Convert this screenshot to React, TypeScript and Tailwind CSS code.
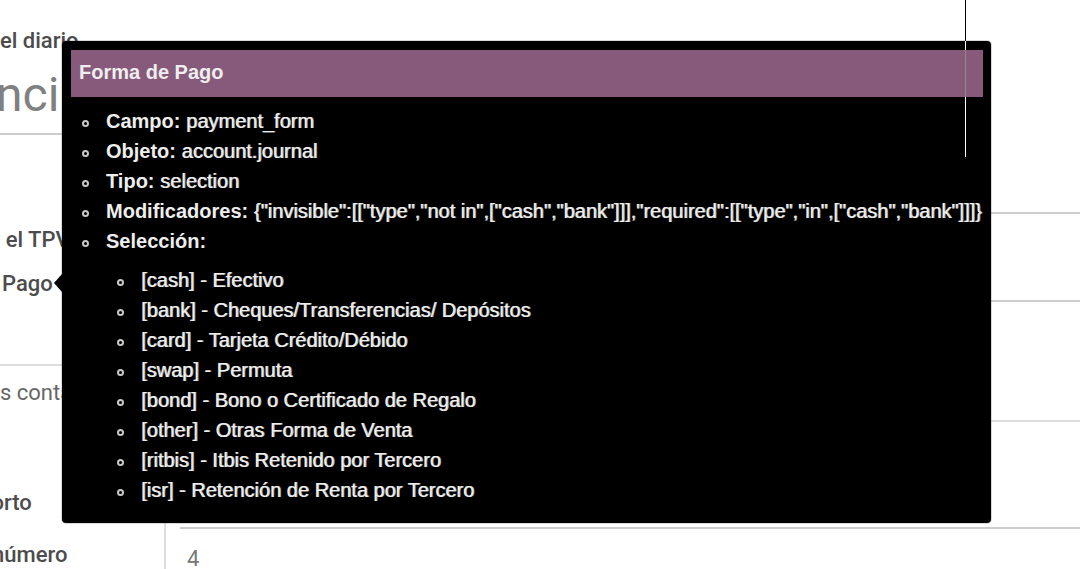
import type { ReactNode } from "react";

const selection = [
  "[cash] - Efectivo",
  "[bank] - Cheques/Transferencias/ Depósitos",
  "[card] - Tarjeta Crédito/Débido",
  "[swap] - Permuta",
  "[bond] - Bono o Certificado de Regalo",
  "[other] - Otras Forma de Venta",
  "[ritbis] - Itbis Retenido por Tercero",
  "[isr] - Retención de Renta por Tercero",
];

const details = [
  { name: "Campo:", value: "payment_form" },
  { name: "Objeto:", value: "account.journal" },
  { name: "Tipo:", value: "selection" },
  {
    name: "Modificadores:",
    value: '{"invisible":[["type","not in",["cash","bank"]]],"required":[["type","in",["cash","bank"]]]}',
  },
];

function Item({ children }: { children: ReactNode }) {
  return (
    <li className="flex h-[30px] items-center whitespace-nowrap">
      <span className="mt-1 mr-[17px] size-[7px] shrink-0 rounded-full border-2 border-[#c8c8c8]" />
      <span>{children}</span>
    </li>
  );
}

function Tooltip() {
  return (
    <div
      role="tooltip"
      className="absolute top-[41px] left-[62px] rounded bg-black p-[9px] pr-2 pb-[18px] font-['Liberation_Sans',sans-serif] text-[20px] text-[#eeeeee] ring-1 ring-black/15"
    >
      <svg className="absolute top-[233px] -left-2 h-[18px] w-2" viewBox="0 0 8 18" aria-hidden="true">
        <path d="M8 0 L0 9 L8 18 Z" fill="#000" />
      </svg>
      <h2 className="h-[47px] bg-[#875a7b] px-2 leading-[45px] font-bold">Forma de Pago</h2>
      <ul className="mt-[9px] pr-px pl-[11px]">
        {details.map((d) => (
          <Item key={d.name}>
            <b>{d.name}</b> <span className="[text-shadow:1px_0_#ffffffb0]">{d.value}</span>
          </Item>
        ))}
        <Item>
          <b>Selección:</b>
        </Item>
      </ul>
      <ul className="mt-[9px] pl-[46px]">
        {selection.map((s) => (
          <Item key={s}>
            <span className="[text-shadow:1px_0_#ffffffb0]">{s}</span>
          </Item>
        ))}
      </ul>
    </div>
  );
}

export default function App() {
  return (
    <main className="relative flex min-h-screen flex-col overflow-hidden bg-white font-[Roboto,sans-serif] text-[22px] font-medium text-[#4c4c4c]">
      <section className="w-1/2 border-b-2 border-[#cccccc] pt-[26px]">
        <p className="h-[30px] leading-[30px]">el diario</p>
        <h1 className="-ml-1 h-[77px] text-[48px] leading-[77px] font-normal text-[#808080]">nci</h1>
      </section>
      <section className="grid h-[231px] grid-cols-2">
        <div className="flex flex-col gap-[14px] border-b-2 border-[#dddddd] pt-[90px]">
          <p className="-ml-3 leading-[30px]">n el TPV</p>
          <p className="ml-[2px] leading-[30px]">Pago</p>
        </div>
        <div>
          <div className="h-[79px] border-b-2 border-[#cccccc]" />
          <div className="h-[88px] border-b-2 border-[#cccccc]" />
        </div>
      </section>
      <section className="grid h-[56px] grid-cols-2 font-normal text-[#666666]">
        <p className="pt-3 leading-[30px]">s contables</p>
        <div className="border-b-2 border-[#dddddd]" />
      </section>
      <section className="grid flex-1 grid-cols-[166px_1fr]">
        <div className="flex flex-col gap-[22px] border-r-2 border-[#dddddd] pt-[66px]">
          <label htmlFor="code" className="-ml-5 leading-[30px]">corto</label>
          <label htmlFor="next" className="-ml-2 leading-[30px]">número</label>
        </div>
        <div className="ml-[14px]">
          <input id="code" className="block h-[107px] w-full border-b-2 border-[#cccccc] outline-none" />
          <input id="next" defaultValue="4" className="block h-[40px] w-full px-[7px] pt-[18px] font-normal text-[#777777] outline-none" />
        </div>
      </section>
      <Tooltip />
      <div className="absolute top-0 left-[965px] flex w-px flex-col" aria-hidden="true">
        <span className="h-[41px] bg-black" />
        <span className="h-[9px] bg-white" />
        <span className="h-[47px] bg-[#8c8c8c]" />
        <span className="h-[60px] bg-white" />
      </div>
    </main>
  );
}
